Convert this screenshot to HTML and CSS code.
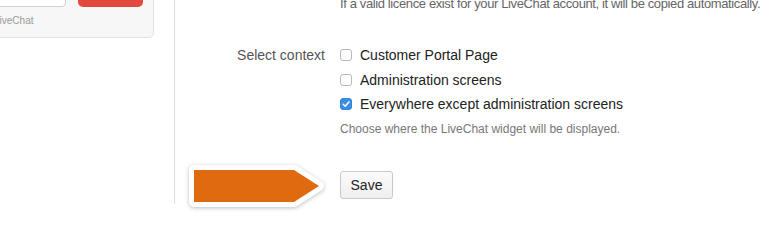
FILE: index.html
```html
<!DOCTYPE html>
<html lang="en">
<head>
<meta charset="utf-8">
<title>LiveChat settings</title>
<link rel="stylesheet" href="styles.css">
</head>
<body>
<div class="page">
  <aside class="side">
    <div class="card">
      <div class="card-row">
        <div class="input"></div>
        <div class="btn-red"></div>
      </div>
      <div class="powered">LiveChat</div>
    </div>
  </aside>
  <main class="main">
    <p class="top-help">If a valid licence exist for your LiveChat account, it will be copied automatically.</p>
    <div class="group">
      <div class="label">Select context</div>
      <div class="controls">
        <div class="opt"><span class="cb"></span><span>Customer Portal Page</span></div>
        <div class="opt"><span class="cb"></span><span>Administration screens</span></div>
        <div class="opt"><span class="cb checked"><svg viewBox="0 0 12 12" width="12" height="12"><path d="M3.2 6.3 L5.2 8.2 L8.9 3.9" fill="none" stroke="#fff" stroke-width="1.5" stroke-linecap="round" stroke-linejoin="round"/></svg></span><span>Everywhere except administration screens</span></div>
        <p class="help">Choose where the LiveChat widget will be displayed.</p>
      </div>
    </div>
    <div class="actions">
      <button class="save" type="button">Save</button>
    </div>
  </main>
  <svg class="arrow" viewBox="0 0 150 50" width="150" height="50">
    <polygon points="14,10 114,10 139,26 114,42 14,42" fill="#fff" stroke="#fff" stroke-width="10" stroke-linejoin="round"/>
    <polygon points="14,10 114,10 139,26 114,42 14,42" fill="#df6a10"/>
  </svg>
</div>
</body>
</html>
```
FILE: styles.css
```css
html, body {
  margin: 0;
  padding: 0;
  background: #fff;
}
body {
  width: 770px;
  height: 250px;
  overflow: hidden;
  font-family: "Liberation Sans", Arial, Helvetica, sans-serif;
}
.page {
  position: relative;
  display: flex;
  align-items: flex-start;
}
.side {
  width: 174px;
  height: 204px;
  border-right: 1px solid #dcdcdc;
  flex: none;
}
.card {
  margin-left: -20px;
  margin-top: -40px;
  width: 174px;
  box-sizing: border-box;
  padding: 15px 10px 10px 13px;
  background: #f7f7f7;
  border: 1px solid #e2e2e2;
  border-radius: 5px;
}
.card-row {
  display: flex;
  gap: 12px;
}
.input {
  width: 72px;
  height: 29px;
  background: #fff;
  border: 1px solid #d0d0d0;
  border-radius: 4px;
}
.btn-red {
  width: 66px;
  height: 31px;
  background: #e2493e;
  border-radius: 5px;
}
.powered {
  margin-top: 8px;
  font-size: 10px;
  line-height: 12px;
  color: #9a9a9a;
}
.main {
  flex: 1;
}
.top-help {
  margin: -4px 0 0 165px;
  font-size: 13px;
  letter-spacing: -0.38px;
  line-height: 16px;
  color: #666;
  white-space: nowrap;
}
.group {
  margin-top: 31px;
  display: grid;
  grid-template-columns: 150px 1fr;
  column-gap: 15px;
}
.label {
  text-align: right;
  font-size: 14px;
  line-height: 24.5px;
  color: #555;
}
.controls {
  display: flex;
  flex-direction: column;
}
.opt {
  display: flex;
  align-items: center;
  gap: 8px;
  height: 24.5px;
  font-size: 14px;
  color: #222;
}
.cb {
  width: 12px;
  height: 12px;
  box-sizing: border-box;
  border: 1px solid #b8b8b8;
  border-radius: 3px;
  background: #fff;
  display: flex;
  flex: none;
}
.cb.checked {
  background: #3b8ee8;
  border-color: #3484dc;
}
.cb.checked svg {
  margin: -1px;
}
.help {
  margin: 4.5px 0 0;
  font-size: 12px;
  line-height: 16px;
  color: #777;
}
.actions {
  margin: 34px 0 0 165px;
}
.save {
  width: 53px;
  height: 28px;
  padding: 0;
  font-family: "Liberation Sans", Arial, Helvetica, sans-serif;
  font-size: 14px;
  color: #222;
  background: linear-gradient(#fbfbfb, #efefef);
  border: 1px solid #c9c9c9;
  border-radius: 3px;
}
.arrow {
  position: absolute;
  left: 180px;
  top: 160px;
  filter: drop-shadow(0 1px 2px rgba(0, 0, 0, 0.25));
}
```
